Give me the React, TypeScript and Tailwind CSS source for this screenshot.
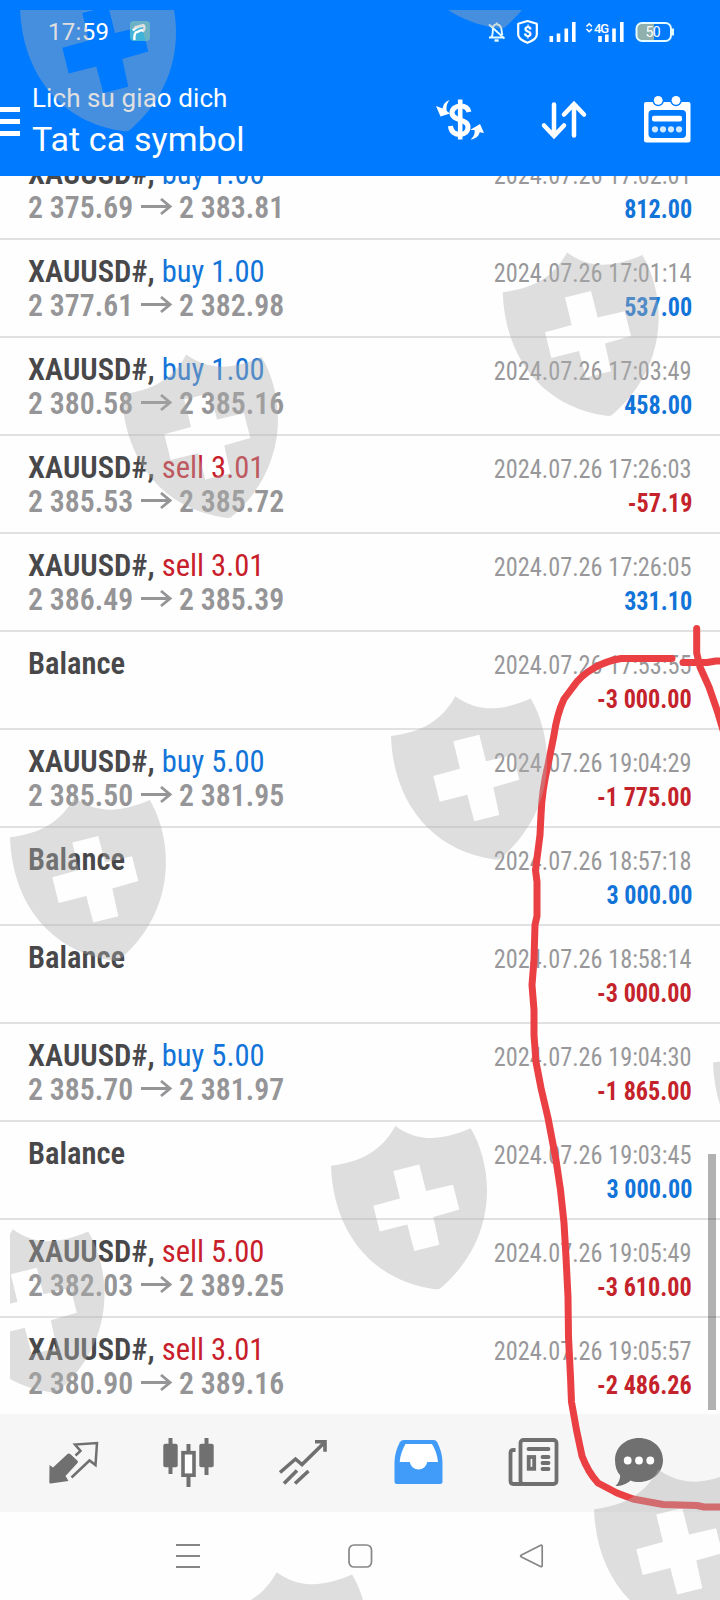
import React from 'react'
import { clsx } from 'clsx'

interface Deal {
  symbol: string
  side?: 'buy' | 'sell'
  volume?: string
  open?: string
  close?: string
  time: string
  profit: string
}

const deals: Deal[] = [
  { symbol: 'XAUUSD#', side: 'buy', volume: '1.00', open: '2 375.69', close: '2 383.81', time: '2024.07.26 17:02:01', profit: '812.00' },
  { symbol: 'XAUUSD#', side: 'buy', volume: '1.00', open: '2 377.61', close: '2 382.98', time: '2024.07.26 17:01:14', profit: '537.00' },
  { symbol: 'XAUUSD#', side: 'buy', volume: '1.00', open: '2 380.58', close: '2 385.16', time: '2024.07.26 17:03:49', profit: '458.00' },
  { symbol: 'XAUUSD#', side: 'sell', volume: '3.01', open: '2 385.53', close: '2 385.72', time: '2024.07.26 17:26:03', profit: '-57.19' },
  { symbol: 'XAUUSD#', side: 'sell', volume: '3.01', open: '2 386.49', close: '2 385.39', time: '2024.07.26 17:26:05', profit: '331.10' },
  { symbol: 'Balance', time: '2024.07.26 17:53:55', profit: '-3 000.00' },
  { symbol: 'XAUUSD#', side: 'buy', volume: '5.00', open: '2 385.50', close: '2 381.95', time: '2024.07.26 19:04:29', profit: '-1 775.00' },
  { symbol: 'Balance', time: '2024.07.26 18:57:18', profit: '3 000.00' },
  { symbol: 'Balance', time: '2024.07.26 18:58:14', profit: '-3 000.00' },
  { symbol: 'XAUUSD#', side: 'buy', volume: '5.00', open: '2 385.70', close: '2 381.97', time: '2024.07.26 19:04:30', profit: '-1 865.00' },
  { symbol: 'Balance', time: '2024.07.26 19:03:45', profit: '3 000.00' },
  { symbol: 'XAUUSD#', side: 'sell', volume: '5.00', open: '2 382.03', close: '2 389.25', time: '2024.07.26 19:05:49', profit: '-3 610.00' },
  { symbol: 'XAUUSD#', side: 'sell', volume: '3.01', open: '2 380.90', close: '2 389.16', time: '2024.07.26 19:05:57', profit: '-2 486.26' },
]

function StatusBar() {
  return (
    <div className="flex h-[64px] items-center pl-[48px] pr-[44px] text-white">
      <span className="w-[62px] text-[24px] leading-none tracking-[0.3px]">17:59</span>
      <svg className="ml-[19px] h-[22px] w-[22px]" viewBox="0 0 22 22">
        <rect x="1" y="0" width="20" height="20" rx="4" fill="#3fb4d8" />
        <path d="M5.500 19c-.5-4 0-7 2.500-8.500M4 9.500C7 5 10 5.500 15 4.500M5.500 6.500l9-2.500c2 2 1 5-1 6.500M8 11.500c2-2 4-2.500 6-2" fill="none" stroke="#fff" strokeWidth="2.400" />
      </svg>
      <div className="ml-auto flex items-center">
        <svg className="h-[24px] w-[18px]" viewBox="488 20 18 24" fill="none" stroke="#e4fbff" strokeWidth="1.9">
          <path d="M489 37.500h14.500M491.300 37c1.700-2 1.500-4 1.500-8M492.800 27c2-4 7.500-3.200 8.500 1.500.5 2 .2 4.500 1.200 6.500M489 24.500l15.500 14M496.700 22.500v2" />
          <path d="M494.500 40.500h4.200" strokeWidth="2.400" />
        </svg>
        <svg className="ml-[10px] h-[24px] w-[23px]" viewBox="516 20 23 24">
          <path d="M527.500 21l9.300 2.800v10.700c0 3.500-4 6.300-9.300 8.300-5.300-2-9.300-4.800-9.300-8.300V23.800z" fill="none" stroke="#fff" strokeWidth="2.200" strokeLinejoin="round" />
          <text x="527.500" y="37" textAnchor="middle" fontSize="15" fontWeight="800" fill="#fff">$</text>
        </svg>
        <svg className="ml-[9px] h-[24px] w-[29px]" viewBox="548 20 29 24" stroke="#fff" strokeWidth="3.6">
          <path d="M551.300 36v6M558.500 33.500v8.500M566.300 28.500v13.500M573.800 22v20" />
        </svg>
        <svg className="ml-[8px] h-[24px] w-[40px]" viewBox="585 20 40 24">
          <path d="M586.500 26.500l2.700-2.700 2.700 2.700M586.500 29l2.700 2.700 2.700-2.700" fill="none" stroke="#fff" strokeWidth="1.600" />
          <path d="M600 36v6M606.800 34.500v7.500M614 28.500v13.500M621.800 22v20" stroke="#fff" strokeWidth="3.6" />
          <text x="594" y="33.200" fontSize="13" fontWeight="500" textLength="15" fill="#fff">4G</text>
        </svg>
        <svg className="ml-[10px] h-[24px] w-[41px]" viewBox="635 20 41 24">
          <path d="M642 23h12v18h-12a5 5 0 0 1-5-5v-8a5 5 0 0 1 5-5z" fill="#8fb0ad" />
          <rect x="636.500" y="23" width="34.500" height="18" rx="5.500" fill="none" stroke="#e4fbff" strokeWidth="2" />
          <path d="M673 28.500v7" stroke="#e4fbff" strokeWidth="2" />
          <text x="653" y="37" textAnchor="middle" fontSize="14" textLength="15" fill="#fff">50</text>
        </svg>
      </div>
    </div>
  )
}

function Header() {
  return (
    <header className="h-[176px] shrink-0 bg-[#007aff] text-white">
      <StatusBar />
      <div className="flex h-[112px]">
        <div className="flex w-[20px] flex-col gap-[7px] pt-[43px]">
          <div className="h-[5px] bg-white" />
          <div className="h-[5px] bg-white" />
          <div className="h-[5px] bg-white" />
        </div>
        <div className="flex flex-col pl-[12px] pt-[20px]">
          <div className="text-[26px] leading-[28px] tracking-[0.08px]">Lich su giao dich</div>
          <div className="mt-[6px] text-[34px] leading-[42px] tracking-[0.1px]">Tat ca symbol</div>
        </div>
        <div className="ml-auto flex pr-[28px] pt-[30px]">
          <svg className="h-[50px] w-[54px]" viewBox="434 94 54 50" fill="none" stroke="#fff" strokeWidth="4.6">
            <path d="M460.200 99.500v40" />
            <path d="M469 112c-1-4-4-6-8.500-6-5 0-8.500 3-8.500 6.800 0 8.700 16 5.500 16 14 0 4.800-3.500 7.700-8 7.700-5 0-9-2.500-9.500-8.500" strokeWidth="5" />
            <path d="M449.500 100c-4.500 1.500-6.500 5-6.800 8.500l-6.700-2.500 4.500 10.500 9.500-3-3.300-2.500c-.7-4 0-7 2.800-11zM470.500 139.500c4-3.500 4.500-6.500 4-9.500h-4.500l10-6 4 9-4.300-.8c-1 4-4.200 6.800-9.200 7.300z" fill="#fff" stroke="none" />
          </svg>
          <svg className="ml-[50px] h-[50px] w-[50px]" viewBox="538 94 50 50" fill="none" stroke="#fff" strokeWidth="4.500" strokeLinecap="round">
            <path d="M554 104.500v31M544 125.500l10 10.500 10-10.500M574 135.500v-31M564 114.500l10-10.500 10 10.500" />
          </svg>
          <svg className="ml-[54px] h-[50px] w-[50px]" viewBox="642 94 50 50">
            <path d="M646 102h42.500a2 2 0 0 1 2 2v36a2.500 2.500 0 0 1-2.500 2.500h-41.500a2.500 2.500 0 0 1-2.500-2.500v-36a2 2 0 0 1 2-2z" fill="#fff" />
            <rect x="648.500" y="110" width="37.500" height="28" rx="4" fill="#007aff" />
            <circle cx="658.200" cy="100.500" r="5.700" fill="#007aff" />
            <circle cx="676" cy="100.500" r="5.700" fill="#007aff" />
            <circle cx="658.200" cy="100.300" r="4.400" fill="#fff" />
            <circle cx="676" cy="100.300" r="4.400" fill="#fff" />
            <rect x="652" y="115.700" width="30" height="5.800" rx="2" fill="#fff" />
            <g fill="#cfe8ff">
              <circle cx="655" cy="129.300" r="3.100" />
              <circle cx="663" cy="129.300" r="3.100" />
              <circle cx="671" cy="129.300" r="3.100" />
              <circle cx="679" cy="129.300" r="3.100" />
            </g>
          </svg>
        </div>
      </div>
    </header>
  )
}

function DealRow({ deal }: { deal: Deal }) {
  const isLoss = deal.profit.startsWith('-')

  return (
    <div className="flex h-[98px] shrink-0 justify-between border-b-2 border-[#e1e1e2] pl-[28px] pr-[28px] font-stretch-condensed">
      <div className="pt-[14px] text-[32px] font-semibold leading-[34px] whitespace-nowrap">
        <div className="w-fit origin-left scale-x-[0.955] text-[#48484a]">
          {deal.symbol}
          {deal.side && (
            <>
              {', '}
              <span className={clsx('font-normal', deal.side === 'buy' ? 'text-[#1274d8]' : 'text-[#c8202a]')}>
                {deal.side} {deal.volume}
              </span>
            </>
          )}
        </div>
        {deal.open && (
          <div className="flex items-center text-[#959597]">
            <span className="w-[113px] origin-left scale-x-[0.93]">{deal.open}</span>
            <svg className="h-[18px] w-[31px]" viewBox="0 0 31 18" fill="none" stroke="#959597" strokeWidth="2.8">
              <path d="M0 8.500h29M20 1l9 7.500-9 7.500" />
            </svg>
            <span className="ml-[7px] origin-left scale-x-[0.93]">{deal.close}</span>
          </div>
        )}
      </div>
      <div className="flex flex-col items-end pt-[16px] text-[26px] leading-[34px] whitespace-nowrap">
        <div className="origin-right scale-x-[0.935] text-[#98989a]">{deal.time}</div>
        <div className={clsx('origin-right scale-x-[0.93] font-bold', isLoss ? 'text-[#c4232b]' : 'text-[#1274d8]')}>
          {deal.profit}
        </div>
      </div>
    </div>
  )
}

function TabBar() {
  return (
    <nav className="flex h-[98px] shrink-0 items-start bg-[#f6f6f6] pl-[46px] pt-[20px]">
      <svg className="h-[56px] w-[56px]" viewBox="46 1434 56 56">
        <path d="M49.500 1465l3.500 2.500 14.500-13.500q1.500-1 3 .3l7 6.500q1 1 0 2.200L65.500 1476l3 5-18 2.500q-1.200 0-1.200-1.200z" fill="#707070" />
        <path d="M75.500 1455.500l5-4.500-5.500-6.500 22-1.500-1.500 22-6-4.500-18 17" fill="none" stroke="#707070" strokeWidth="2.500" />
      </svg>
      <svg className="ml-[58px] h-[56px] w-[56px]" viewBox="160 1434 56 56" fill="#707070">
        <path d="M168.500 1438h4v36h-4zM204.500 1438h4v37h-4zM186.500 1444h4v43h-4z" />
        <rect x="163.300" y="1443.700" width="14.400" height="23.500" rx="2" />
        <rect x="199.300" y="1443.700" width="14.400" height="23.500" rx="2" />
        <rect x="183" y="1452.700" width="11" height="22.500" fill="#fff" stroke="#707070" strokeWidth="3.600" />
      </svg>
      <svg className="ml-[60px] h-[56px] w-[56px]" viewBox="276 1434 56 56" fill="none" stroke="#707070" strokeWidth="3.600">
        <path d="M280 1472.500l15.500-13.500 6.500 5.500 22.500-22M315 1441.700h10v10M284 1483.500l13-13M295 1483.500l13.500-12.500" />
      </svg>
      <svg className="ml-[60px] h-[56px] w-[56px]" viewBox="392 1434 56 56">
        <path d="M404 1440h29.500q2.500 0 3.700 2.300 5.300 10.200 5.300 20.200v19q0 2.500-2.500 2.500h-43q-2.500 0-2.500-2.500v-19q0-10 5.300-20.200 1.200-2.300 4.200-2.300z" fill="#419bf9" />
        <path d="M405.500 1444h26.500c3 5 5.500 11 6 18h-10.700a9 9.500 0 0 1-17.600 0h-10c.4-7 3-13 5.800-18z" fill="#fff" />
      </svg>
      <svg className="ml-[58px] h-[56px] w-[56px]" viewBox="506 1434 56 56" fill="none" stroke="#707070" strokeWidth="3.800">
        <rect x="520.500" y="1440" width="36" height="44" rx="3" />
        <path d="M515.500 1450h-2q-3 0-3 3v28q0 3 3 3h9" />
        <path d="M528.500 1449h20M542.500 1457h6M542.500 1463h6M542.500 1469h6" strokeLinecap="round" />
        <rect x="528.700" y="1457" width="5.500" height="11.800" />
      </svg>
      <svg className="ml-[50px] h-[56px] w-[56px]" viewBox="612 1434 56 56">
        <path d="M639 1438c13.500 0 24 9.500 24 22s-10.500 22-24 22c-3 0-6-.5-8.500-1.500-3.500 3.500-9 5.500-15 5.500 3-3 4.500-6 4.700-10.500-3.500-4-5.200-9-5.200-15.500 0-12.500 10.500-22 24-22z" fill="#707070" />
        <circle cx="627.700" cy="1460.500" r="3.900" fill="#fff" />
        <circle cx="639" cy="1460.500" r="3.900" fill="#fff" />
        <circle cx="650.300" cy="1460.500" r="3.900" fill="#fff" />
      </svg>
    </nav>
  )
}

function SystemNav() {
  return (
    <div className="flex flex-1 bg-[#fefefe] pl-[176px] pt-[31px]">
      <svg className="h-[26px] w-[24px]" viewBox="0 0 24 26" stroke="#868686" strokeWidth="1.800">
        <path d="M0 2h24M0 13h24M0 24h24" />
      </svg>
      <svg className="ml-[147px] h-[26px] w-[26px]" viewBox="0 0 26 26" fill="none" stroke="#868686" strokeWidth="1.700">
        <rect x="2" y="2" width="22.500" height="22" rx="5" />
      </svg>
      <svg className="ml-[146px] h-[26px] w-[26px]" viewBox="0 0 26 26" fill="none" stroke="#868686" strokeWidth="1.700" strokeLinejoin="round">
        <path d="M21.700 2.300q1.500-.5 1.500 1.200v19q0 1.700-1.700 1L2.500 14q-1.800-1 0-2z" />
      </svg>
    </div>
  )
}

// left shoulder of every shield
const shields = [
  [20, 7.7],
  [395, -95],
  [502.7, 292.3],
  [122, 394.3],
  [391, 736],
  [10, 837.3],
  [331, 1165.7],
  [-51.5, 1269],
  [713, 1062.5],
  [594, 1509.3],
  [212.4, 1612],
]

const SHIELD =
  'M0 0C30-4 50-14 64.300-39.700 88-23 110-25 139.700-37.400 163 2 168 73 109 123Q107 124 104 123.500C40 115 2 65 0 0z' +
  'M62.300 5.300L69 32.700 42.300 40 48.700 65.700 76.300 58.700 83.300 85.300 108.300 79 102.300 51.300 128.300 43.700 122 19 95 25.300 88.300-1.300z'

function Overlay() {
  return (
    <svg className="pointer-events-none absolute inset-0 h-[1600px] w-[720px]" viewBox="0 0 720 1600">
      <defs>
        <clipPath id="safe-area">
          <rect x="10" y="10" width="710" height="1590" />
        </clipPath>
      </defs>
      <g fill="none" stroke="#ea4044" strokeWidth="7" strokeLinecap="round" strokeLinejoin="round">
        <path d="M672 658.500H621Q606 661 594 668 580 676 573 687L564 699Q557 714 554 735L548 765Q542 790 541 815L540 835 535.500 870 537 882V916L535 925 534 960 532 985 534 1010V1035L536 1062 541 1088 548 1118 556 1160 560.500 1190 564 1223 566 1257 568 1297 568.500 1337 570.500 1377 571.500 1402 576.500 1430 582 1456Q588 1472 598 1483L617 1493 633 1499 663 1504.500 697 1505.500 704 1507H724" />
        <path d="M696.700 628.500V653L700 667 709 687 717 710 723 730M683 662.500H707L716 661H724" />
      </g>
      <g clipPath="url(#safe-area)" fill="rgba(175,175,175,0.4)" fillRule="evenodd">
        {shields.map(([x, y]) => (
          <path key={`${x}:${y}`} d={SHIELD} transform={`translate(${x} ${y})`} />
        ))}
      </g>
    </svg>
  )
}

export default function App() {
  return (
    <div className="relative flex h-[1600px] w-[720px] flex-col overflow-hidden bg-white font-['Roboto',sans-serif]">
      <Header />
      <main className="relative flex h-[1238px] shrink-0 flex-col overflow-hidden bg-[#fefefe]">
        <div className="-mt-[34px] flex shrink-0 flex-col">
          {deals.map((deal, index) => (
            <DealRow key={index} deal={deal} />
          ))}
        </div>
        <div className="absolute right-[4px] top-[978px] h-[256px] w-[8px] bg-black/30" />
      </main>
      <TabBar />
      <SystemNav />
      <Overlay />
    </div>
  )
}
